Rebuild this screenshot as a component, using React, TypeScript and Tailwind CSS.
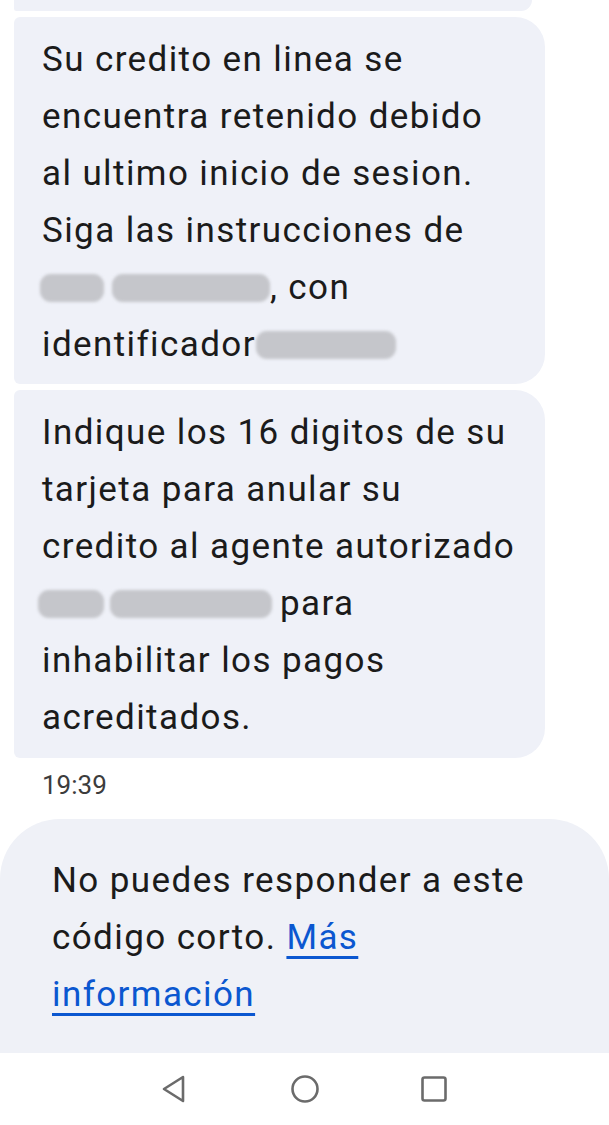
import React from "react";

const Blob = ({ w, className = "" }: { w: number; className?: string }) => (
  <span
    className={`inline-block h-[28px] align-[-4px] rounded-[11px] bg-[#c5c6cb] blur-[1.5px] ${className}`}
    style={{ width: w }}
  />
);

export default function App() {
  return (
    <div
      className="w-[609px] h-[1125px] bg-white flex flex-col overflow-hidden text-[#1b1b1b]"
      style={{ fontFamily: "Roboto, 'Noto Sans', sans-serif" }}
    >
      <div className="flex flex-col gap-[6px] pl-[14px] pr-[64px]">
        <div className="h-[11px] bg-[#eff1f8] rounded-bl-[6px] rounded-br-[28px] w-[518px]" />
        <div className="bg-[#eff1f8] rounded-l-[6px] rounded-r-[30px] pl-[28px] pr-[10px] pt-[14px] pb-[11px] text-[35px] tracking-[1.4px] leading-[57px] whitespace-nowrap">
          <div>Su credito en linea se</div>
          <div>encuentra retenido debido</div>
          <div>al ultimo inicio de sesion.</div>
          <div>Siga las instrucciones de</div>
          <div className="flex items-center">
            <Blob w={64} className="-ml-[2px]" />
            <Blob w={158} className="ml-[8px]" />
            <span>, con</span>
          </div>
          <div className="flex items-center">
            <span>identificador</span>
            <Blob w={140} className="ml-[0px]" />
          </div>
        </div>
        <div className="bg-[#eff1f8] rounded-l-[6px] rounded-r-[30px] pl-[28px] pr-[10px] pt-[14px] pb-[12px] text-[35px] tracking-[1.4px] leading-[57px] whitespace-nowrap">
          <div>Indique los 16 digitos de su</div>
          <div>tarjeta para anular su</div>
          <div>credito al agente autorizado</div>
          <div className="flex items-center">
            <Blob w={66} className="-ml-[4px]" />
            <Blob w={162} className="ml-[6px]" />
            <span className="ml-[8px]">para</span>
          </div>
          <div>inhabilitar los pagos</div>
          <div>acreditados.</div>
        </div>
      </div>
      <div className="pl-[42px] mt-[11px] text-[26px] leading-[32px] text-[#3c3c3c]">19:39</div>
      <div className="mt-[18px] flex-1 bg-[#eff1f7] rounded-t-[60px] pl-[52px] pr-[10px] pt-[33px] text-[35px] tracking-[1.4px] leading-[57px] whitespace-nowrap">
        <div>No puedes responder a este</div>
        <div>
          código corto.{" "}
          <span className="text-[#0b57d0] underline decoration-[3px] underline-offset-[7px]">Más</span>
        </div>
        <div>
          <span className="text-[#0b57d0] underline decoration-[3px] underline-offset-[7px]">información</span>
        </div>
      </div>
      <div className="h-[72px] bg-white flex items-center justify-center shrink-0">
        <div className="flex items-center">
          <svg width="28" height="30" viewBox="0 0 28 30" className="ml-[-2px]">
            <path d="M23 3 L4 15 L23 27 Z" fill="none" stroke="#6b6b6b" strokeWidth="2.6" strokeLinejoin="round" />
          </svg>
          <svg width="30" height="30" viewBox="0 0 30 30" className="ml-[102px]">
            <circle cx="15" cy="15" r="12.5" fill="none" stroke="#6b6b6b" strokeWidth="2.6" />
          </svg>
          <svg width="28" height="28" viewBox="0 0 28 28" className="ml-[100px]">
            <rect x="2.5" y="2.5" width="23" height="23" rx="2" fill="none" stroke="#6b6b6b" strokeWidth="2.6" />
          </svg>
        </div>
      </div>
    </div>
  );
}
